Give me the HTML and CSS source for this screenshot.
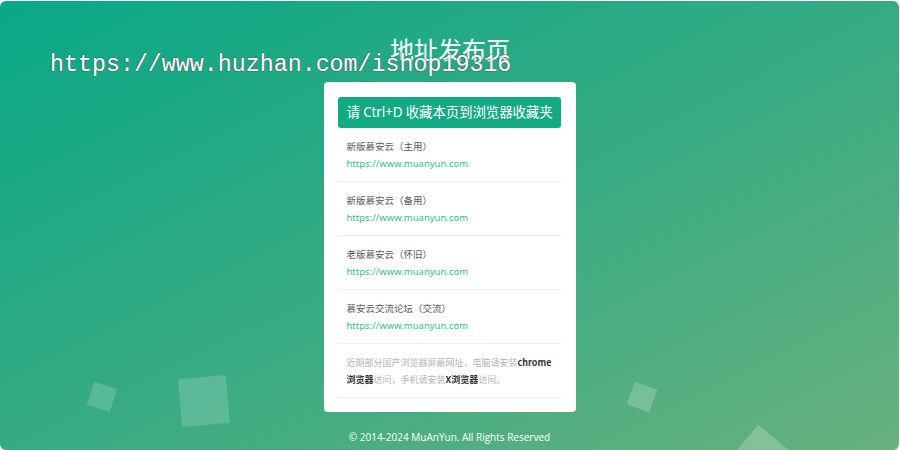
FILE: index.html
```html
<!DOCTYPE html>
<html lang="zh-CN">
<head>
<meta charset="utf-8">
<title>地址发布页</title>
<link rel="stylesheet" href="styles.css">
</head>
<body>
<div class="page">
  <span class="deco deco-a"></span>
  <span class="deco deco-b"></span>
  <span class="deco deco-c"></span>
  <span class="deco deco-d"></span>

  <h1 class="title">地址发布页</h1>

  <div class="card">
    <div class="card-head">请 Ctrl+D 收藏本页到浏览器收藏夹</div>
    <ul class="links">
      <li class="link-item">
        <div class="link-name">新版慕安云（主用）</div>
        <div class="link-url">https://www.muanyun.com</div>
      </li>
      <li class="link-item">
        <div class="link-name">新版慕安云（备用）</div>
        <div class="link-url">https://www.muanyun.com</div>
      </li>
      <li class="link-item">
        <div class="link-name">老版慕安云（怀旧）</div>
        <div class="link-url">https://www.muanyun.com</div>
      </li>
      <li class="link-item">
        <div class="link-name">慕安云交流论坛（交流）</div>
        <div class="link-url">https://www.muanyun.com</div>
      </li>
      <li class="link-item note">
        <div class="note-line">近期部分国产浏览器屏蔽网址，电脑请安装<b>chrome</b></div>
        <div class="note-line"><b>浏览器</b>访问，手机请安装<b>X浏览器</b>访问。</div>
      </li>
    </ul>
  </div>

  <div class="footer">© 2014-2024 MuAnYun. All Rights Reserved</div>

  <div class="watermark">https://www.huzhan.com/ishop19316</div>
</div>
</body>
</html>
```

FILE: styles.css
```css
* { box-sizing: border-box; }
html, body { margin: 0; padding: 0; background: #ffffff; }
body { font-family: "Noto Sans", "Noto Sans CJK SC", sans-serif; }

.page {
  position: relative;
  width: 899px;
  height: 449px;
  margin-top: 1px;
  border-radius: 6px;
  overflow: hidden;
  background: linear-gradient(to bottom right, #08a886 0%, #36ab83 50%, #69b17e 100%);
  display: flex;
  flex-direction: column;
  align-items: center;
}

.title {
  margin: 35px 0 0;
  font-family: "Noto Sans CJK SC", sans-serif;
  font-weight: 400;
  font-size: 24px;
  line-height: 26px;
  color: #ffffff;
  padding-left: 1px;
}

.card {
  margin-top: 20px;
  width: 252px;
  background: #ffffff;
  border-radius: 4px;
  padding: 15px 15px 14px 14px;
}

.card-head {
  background: #12a983;
  color: #ffffff;
  border-radius: 3px;
  height: 31px;
  line-height: 31px;
  padding-left: 9px;
  font-size: 13.5px;
  letter-spacing: -0.15px;
  font-family: "Noto Sans", "Noto Sans CJK SC", sans-serif;
  white-space: nowrap;
}

.links { list-style: none; margin: 0; padding: 0; }

.link-item {
  padding: 10px 9px 9px;
  border-bottom: 1px solid #eeeeee;
  font-size: 9.5px;
  line-height: 17px;
}

.link-name { color: #5a5a5a; font-family: "Noto Sans CJK SC", sans-serif; }
.link-url { color: #34bd8f; font-family: "Noto Sans", sans-serif; }

.note {
  color: #b4b4b4;
  font-size: 9px;
  font-family: "Noto Sans CJK SC", sans-serif;
}
.note-line { white-space: nowrap; }
.note b { color: #333333; font-weight: 700; }

.footer {
  margin-top: 17px;
  color: #ffffff;
  font-family: "Open Sans", sans-serif;
  font-size: 10px;
  line-height: 16px;
}

.deco {
  position: absolute;
  background: rgba(255, 255, 255, 0.17);
}
.deco-a { left: 90px; top: 384px; width: 24px; height: 24px; transform: rotate(18deg); }
.deco-b { left: 180px; top: 376px; width: 48px; height: 48px; transform: rotate(-5deg); }
.deco-c { left: 630px; top: 384px; width: 24px; height: 24px; transform: rotate(20deg); background: rgba(255,255,255,0.2); }
.deco-d { left: 732px; top: 436px; width: 60px; height: 60px; transform: rotate(40deg); background: rgba(255,255,255,0.22); }

.watermark {
  position: absolute;
  left: 50px;
  top: 51px;
  font-family: "Liberation Mono", monospace;
  font-size: 23.3px;
  line-height: 26px;
  color: #ffffff;
  white-space: nowrap;
  text-shadow: 1px 0 0 rgba(90,90,90,0.45), -1px 0 0 rgba(90,90,90,0.45), 0 1px 0 rgba(90,90,90,0.45), 0 -1px 0 rgba(90,90,90,0.45);
}
```
